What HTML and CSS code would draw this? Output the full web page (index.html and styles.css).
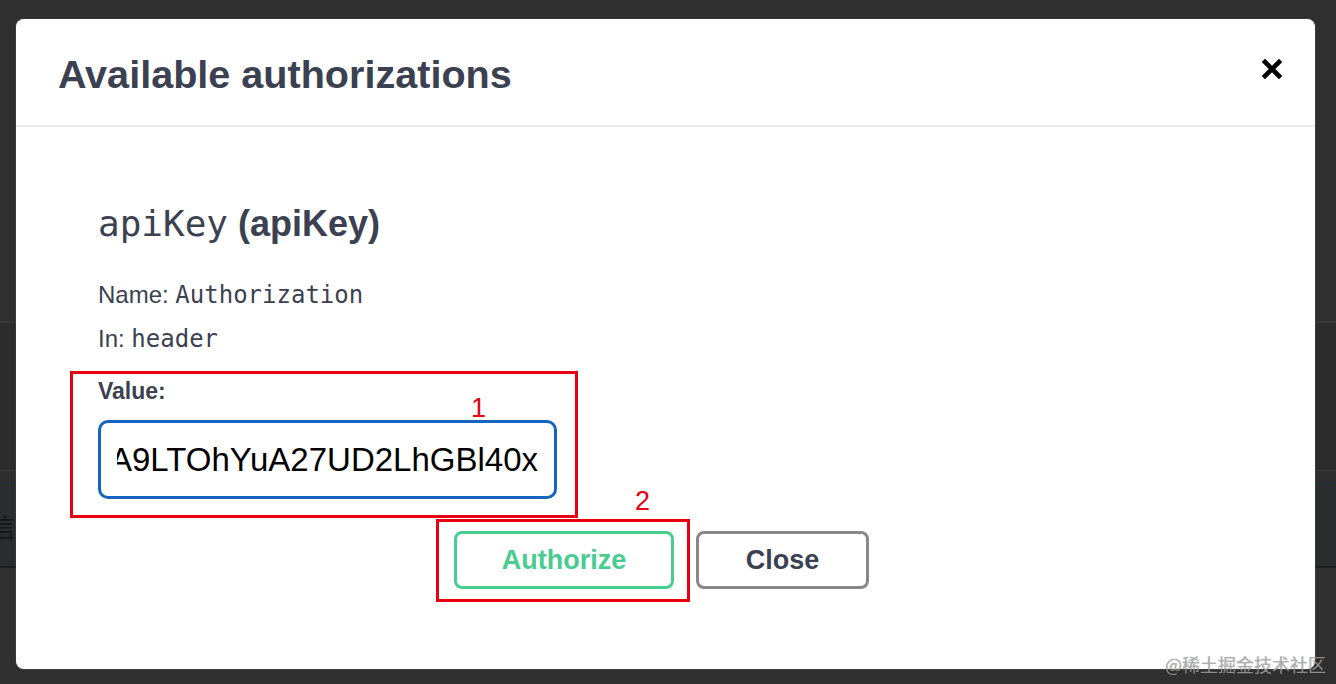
FILE: index.html
```html
<!DOCTYPE html>
<html lang="en">
  <head>
    <meta charset="UTF-8" />
    <title>Available authorizations</title>
    <link rel="stylesheet" href="styles.css">
  </head>
  <body>
    <!-- page behind the modal backdrop -->
    <div class="page">
      <div class="bg-top"></div>
      <div class="bg-rule"></div>
      <div class="bg-mid"></div>
      <div class="bg-band"></div>
      <div class="bg-info"><span class="bg-char">信</span></div>
      <div class="bg-bottom"></div>
    </div>

    <div class="overlay">
      <div class="modal">
        <div class="modal-header">
          <h3>Available authorizations</h3>
          <button class="close-x" aria-label="close">
            <svg width="22" height="22" viewBox="0 0 22 22">
              <path d="M4 4 L18 18 M18 4 L4 18" stroke="#000" stroke-width="4.6" stroke-linecap="square" fill="none"/>
            </svg>
          </button>
        </div>

        <div class="modal-body">
          <h4><code>apiKey</code> (apiKey)</h4>
          <p>Name: <code>Authorization</code></p>
          <p>In: <code>header</code></p>

          <div class="mark-value">
            <label>Value:</label>
            <div class="value-input">
              <div class="value-clip"><span>eyJhbGciOiJIUzUxMiJ9.eyJzdWIiOiJhZG1pbiJ9xRkA9LTOhYuA27UD2LhGBl40x</span></div>
            </div>
            <span class="mark-num num-1">1</span>
          </div>

          <div class="btn-row">
            <div class="btn-wrap">
              <button class="btn authorize">Authorize</button>
              <span class="mark-box"></span>
              <span class="mark-num num-2">2</span>
            </div>
            <button class="btn close">Close</button>
          </div>
        </div>
      </div>
    </div>

    <div class="watermark">@稀土掘金技术社区</div>
  </body>
</html>
```

FILE: styles.css
```css
* {
  margin: 0;
  padding: 0;
  box-sizing: border-box;
}

body {
  position: relative;
  width: 1336px;
  height: 684px;
  overflow: hidden;
  font-family: "Liberation Sans", Arial, sans-serif;
  background-color: #303030;
}

/* background page */
.page {
  display: flex;
  flex-direction: column;
  height: 684px;
}

.bg-top {
  height: 321px;
  background-color: #2f2f2f;
}

.bg-rule {
  height: 2px;
  background-color: #383838;
}

.bg-mid {
  height: 147px;
  background-color: #2c2c2c;
}

.bg-band {
  height: 14px;
  background-color: #2e2e2e;
  border-top: 1px solid #3a3a3a;
  border-bottom: 2px solid #262c3a;
}

.bg-info {
  display: flex;
  align-items: center;
  height: 84px;
  background-color: #2b2c2e;
  border-bottom: 2px solid #1e1e1e;
}

.bg-char {
  margin-left: -11px;
  font-family: "Noto Sans CJK SC", sans-serif;
  font-size: 26px;
  color: #161616;
}

.bg-bottom {
  flex: 1;
  background-color: #303030;
}

/* modal */
.overlay {
  position: absolute;
  inset: 0;
  padding: 19px 21px 15px 16px;
  display: flex;
}

.modal {
  flex: 1;
  background-color: #fff;
  border-radius: 8px;
  box-shadow: 0 0 1px rgba(255, 255, 255, 0.6);
  color: #3b4151;
}

.modal-header {
  display: flex;
  align-items: flex-start;
  height: 108px;
  padding: 31px 32px 0 42px;
  border-bottom: 2px solid #ebebeb;
}

.modal-header h3 {
  font-size: 39.6px;
  line-height: 48px;
  font-weight: bold;
  color: #3b4151;
}

.close-x {
  margin-left: auto;
  margin-top: 8px;
  border: none;
  background: none;
  display: flex;
}

.modal-body {
  padding-left: 82px;
}

.modal-body h4 {
  margin: 75px 0 27px;
  font-size: 36px;
  line-height: 44px;
  font-weight: bold;
}

.modal-body h4 code {
  font-weight: normal;
}

code {
  font-family: "DejaVu Sans Mono", monospace;
}

.modal-body p {
  font-size: 24px;
  line-height: 43px;
}

/* red annotation boxes */
.mark-value {
  position: relative;
  width: 508px;
  margin: 10px 0 0 -28px;
  padding: 3px 18px 16px 25px;
  border: 3px solid #e60012;
}

.mark-value label {
  display: block;
  font-size: 23px;
  line-height: 28px;
  font-weight: bold;
}

.value-input {
  display: flex;
  align-items: center;
  height: 79px;
  margin-top: 15px;
  padding: 0 16px;
  border: 3px solid #1565c0;
  border-radius: 10px;
}

.value-clip {
  flex: 1;
  display: flex;
  justify-content: flex-end;
  overflow: hidden;
  white-space: nowrap;
  font-size: 33px;
  line-height: 40px;
  color: #000;
}

.mark-num {
  position: absolute;
  font-size: 27px;
  line-height: 30px;
  color: #e60012;
}

.num-1 {
  left: 398px;
  top: 19px;
}

.btn-row {
  display: flex;
  justify-content: center;
  gap: 22px;
  margin: 13px 0 0 -82px;
  padding-right: 8px;
}

.btn-wrap {
  position: relative;
  display: flex;
}

.btn {
  height: 58px;
  border: 3px solid #888;
  border-radius: 8px;
  background-color: #fff;
  font-family: "Liberation Sans", Arial, sans-serif;
  font-size: 27px;
  font-weight: bold;
  cursor: pointer;
}

.authorize {
  width: 220px;
  border-color: #49cc90;
  color: #49cc90;
}

.close {
  width: 173px;
  color: #3b4151;
}

.mark-box {
  position: absolute;
  left: -18px;
  right: -16px;
  top: -12px;
  bottom: -13px;
  border: 3px solid #e60012;
}

.num-2 {
  left: 181px;
  top: -45px;
}

.watermark {
  position: absolute;
  right: 10px;
  bottom: 9px;
  font-family: "Noto Sans CJK SC", sans-serif;
  font-size: 18px;
  line-height: 22px;
  color: rgba(175, 175, 175, 0.8);
  text-shadow: 0 0 1px rgba(0, 0, 0, 0.35);
}
```
